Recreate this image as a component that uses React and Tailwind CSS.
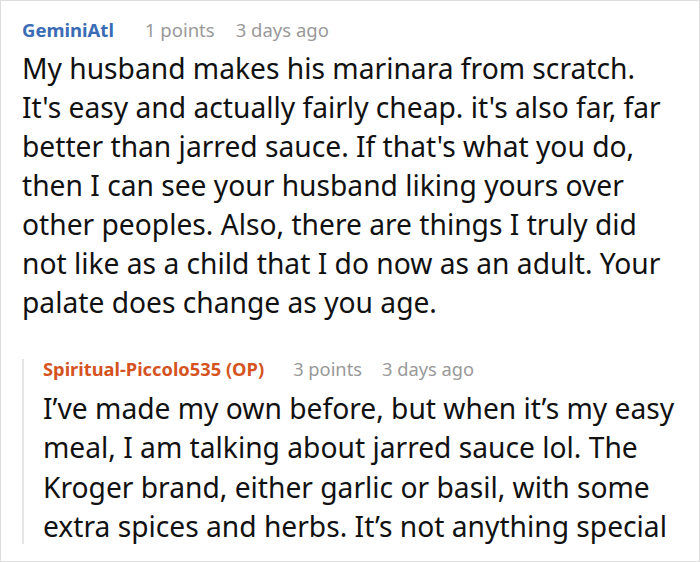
export default function App() {
  const font = { fontFamily: '"Noto Sans", "Open Sans", sans-serif' };
  const first = [
    "My husband makes his marinara from scratch.",
    "It's easy and actually fairly cheap. it's also far, far",
    "better than jarred sauce. If that's what you do,",
    "then I can see your husband liking yours over",
    "other peoples. Also, there are things I truly did",
    "not like as a child that I do now as an adult. Your",
    "palate does change as you age.",
  ];
  const second = [
    "I’ve made my own before, but when it’s my easy",
    "meal, I am talking about jarred sauce lol. The",
    "Kroger brand, either garlic or basil, with some",
    "extra spices and herbs. It’s not anything special",
  ];
  return (
    <div className="w-[700px] h-[562px] bg-white border border-[#dddddd] box-border overflow-hidden" style={font}>
      <div className="h-[543px] overflow-hidden pl-[21px] pr-[4px]">
        <div className="pt-[17px] flex items-center h-[41px] text-[18.5px] leading-[24px]">
          <span className="font-bold text-[#3a6cb5]">GeminiAtl</span>
          <span className="ml-[31px] text-[#999999]">1 points</span>
          <span className="ml-[21px] text-[#999999]">3 days ago</span>
        </div>
        <div className="mt-[7px] text-[28.2px] leading-[39px] text-[#111111]">
          {first.map((l, i) => (
            <div key={i} className="whitespace-nowrap">{l}</div>
          ))}
        </div>
        <div className="mt-[47px] border-l-2 border-[#e6e6e6] pl-[19px]">
          <div className="-mt-[10px] flex items-center h-[20px] text-[18.3px] leading-[20px]">
            <span className="font-bold text-[#d5531f]">Spiritual-Piccolo535 (OP)</span>
            <span className="ml-[29px] text-[#999999]">3 points</span>
            <span className="ml-[20px] text-[#999999]">3 days ago</span>
          </div>
          <div className="mt-[10px] text-[28.2px] leading-[39.3px] text-[#111111]">
            {second.map((l, i) => (
              <div key={i} className="whitespace-nowrap">{l}</div>
            ))}
          </div>
        </div>
      </div>
    </div>
  );
}
